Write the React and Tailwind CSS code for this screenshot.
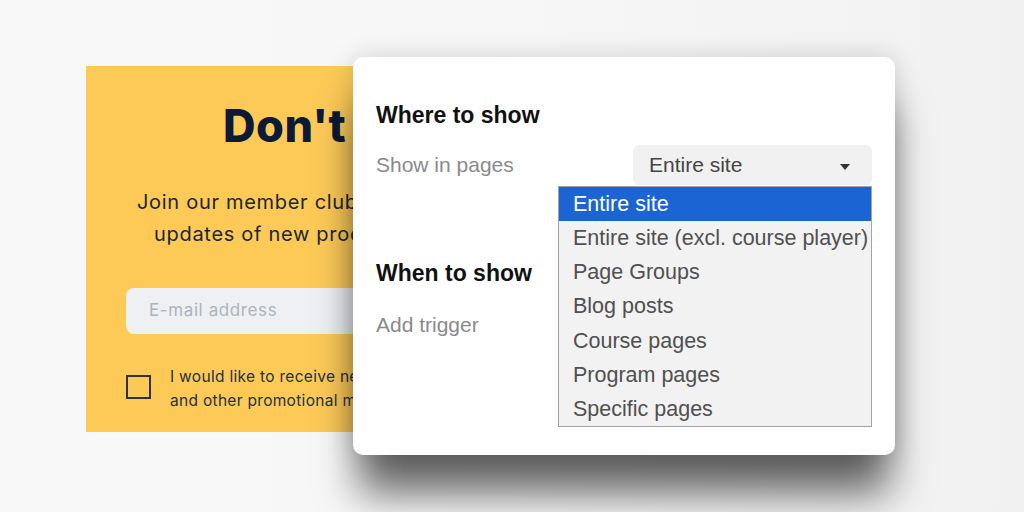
const OPTIONS = [
  "Entire site",
  "Entire site (excl. course player)",
  "Page Groups",
  "Blog posts",
  "Course pages",
  "Program pages",
  "Specific pages",
];

// yellow signup card, mostly hidden behind the settings panel
function SignupCard() {
  return (
    <div
      className="absolute left-[86px] top-[66px] w-[267px] h-[366px] overflow-hidden bg-[#fdca58] text-[#1b2638]"
      style={{ fontFamily: "Inter, 'Noto Sans', sans-serif" }}
    >
      <h1 className="pl-[137px] pt-[32px] text-[45px] leading-[56px] font-extrabold text-[#0c1a35] tracking-[0.5px] whitespace-nowrap">
        Don't miss out!
      </h1>
      <div className="mt-[32px] text-[20px] leading-[32px] tracking-[0.7px] whitespace-nowrap">
        <p className="pl-[51px]">Join our member club and get</p>
        <p className="pl-[68px]">updates of new products</p>
      </div>
      <div className="ml-[40px] mt-[38px] h-[46px] w-[400px] rounded-lg bg-[#eef0f3] flex items-center pl-[23px] text-[17px] tracking-[0.6px] text-[#aeb3bc]">
        E-mail address
      </div>
      <div className="ml-[40px] mt-[31px] flex gap-[19px]">
        <div className="mt-[10px] w-[25px] h-[24px] border-2 border-[#2b3442] shrink-0" />
        <div className="text-[15.5px] leading-[24px] tracking-[0.3px] whitespace-nowrap text-[#263040]">
          <p>I would like to receive news</p>
          <p>and other promotional material</p>
        </div>
      </div>
    </div>
  );
}

function Caret() {
  return (
    <svg width="10" height="6" viewBox="0 0 10 6" className="mt-[3px]">
      <path d="M0 0 L10 0 L5 6 Z" fill="#333" />
    </svg>
  );
}

function SettingsPanel() {
  return (
    <div
      className="absolute left-[353px] top-[57px] w-[542px] h-[398px] rounded-[10px] bg-white px-[23px] pt-[44px] shadow-[0_44px_42px_-6px_rgba(0,0,0,0.6),0_0_26px_rgba(0,0,0,0.16)]"
      style={{ fontFamily: "'Liberation Sans', Arial, sans-serif" }}
    >
      <h2 className="text-[23px] leading-[28px] font-semibold text-[#111]">Where to show</h2>
      <div className="mt-[16px] flex items-center justify-between">
        <span className="text-[21px] text-[#8a8a8a]">Show in pages</span>
        <div className="w-[239px] h-[40px] rounded-md bg-[#f1f1f1] flex items-center justify-between pl-[16px] pr-[22px] text-[21px] text-[#444]">
          <span>Entire site</span>
          <Caret />
        </div>
      </div>
      <h2 className="mt-[74px] text-[23px] leading-[28px] font-semibold text-[#111]">When to show</h2>
      <p className="mt-[24px] text-[21px] leading-[28px] text-[#8a8a8a]">Add trigger</p>

      <ul className="absolute left-[205px] top-[129px] w-[314px] border border-[#a3a3a3] bg-[#f2f2f2] text-[21.5px]">
        {OPTIONS.map((o, i) => (
          <li
            key={o}
            className={
              i === 0
                ? "h-[34px] leading-[34px] pl-[14px] bg-[#1a64d3] text-white whitespace-nowrap"
                : "h-[34.2px] leading-[34px] pl-[14px] text-[#505050] whitespace-nowrap"
            }
          >
            {o}
          </li>
        ))}
      </ul>
    </div>
  );
}

export default function App() {
  return (
    <div className="relative w-[1024px] h-[512px] overflow-hidden bg-gradient-to-r from-[#f8f8f8] via-[#f7f7f7] to-[#f1f1f1]">
      <SignupCard />
      <SettingsPanel />
    </div>
  );
}
